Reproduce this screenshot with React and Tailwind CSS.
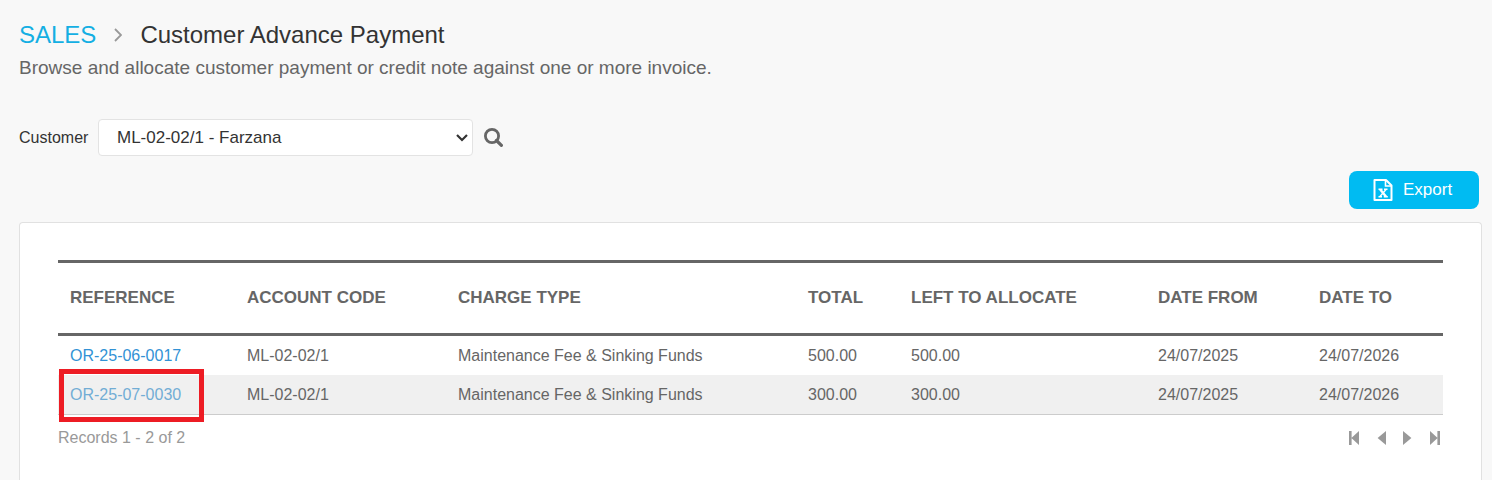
import { useState } from "react";

const payments = [
  {
    reference: "OR-25-06-0017",
    accountCode: "ML-02-02/1",
    chargeType: "Maintenance Fee & Sinking Funds",
    total: 500,
    left: 500,
    dateFrom: "24/07/2025",
    dateTo: "24/07/2026",
  },
  {
    reference: "OR-25-07-0030",
    accountCode: "ML-02-02/1",
    chargeType: "Maintenance Fee & Sinking Funds",
    total: 300,
    left: 300,
    dateFrom: "24/07/2025",
    dateTo: "24/07/2026",
    highlighted: true,
  },
];

const columns = [
  { label: "REFERENCE", width: "w-[177px]" },
  { label: "ACCOUNT CODE", width: "w-[211px]" },
  { label: "CHARGE TYPE", width: "w-[350px]" },
  { label: "TOTAL", width: "w-[103px]" },
  { label: "LEFT TO ALLOCATE", width: "w-[247px]" },
  { label: "DATE FROM", width: "w-[161px]" },
  { label: "DATE TO", width: "w-[136px]" },
];

const pagerButtons = [
  { label: "First page", path: "M0 0h2.6v14H0zM10 0v14L2.4 7z" },
  { label: "Previous page", path: "M10 0v14L1.6 7z" },
  { label: "Next page", path: "M0 0v14l8.400-7z" },
  { label: "Last page", path: "M7.400 0h2.600v14H7.400zM0 0v14l7.600-7z" },
];

const SearchIcon = () => (
  <svg className="w-[19px] h-[19px]" viewBox="0 0 19 19" fill="none" stroke="currentColor" aria-hidden="true">
    <circle cx="8" cy="8" r="6.6" strokeWidth="2.8" />
    <path d="M12.5 12.5l4.900 4.900" strokeWidth="3.2" strokeLinecap="round" />
  </svg>
);

const ExcelIcon = () => (
  <svg className="w-5 h-6" viewBox="0 0 20 24" fill="none" stroke="currentColor" aria-hidden="true">
    <path d="M1.5 2h11.500l5.500 5.500V22h-17z" strokeWidth="2" strokeLinejoin="round" />
    <path d="M12.5 2v6h6" strokeWidth="1.6" />
    <path d="M7.2 11.5l5.800 7" strokeWidth="2.4" />
    <path d="M13 11.5l-6 7" strokeWidth="1.4" />
    <path d="M5.5 11.2h4M11 11.2h3.500M5.5 18.8h3.500M10.8 18.8h4" strokeWidth="1.4" />
  </svg>
);

const App = () => {
  const [customer, setCustomer] = useState("ML-02-02/1");

  return (
    <div className="flex flex-col min-h-screen bg-[#f8f8f8] pl-[19px] pr-[10px] pt-5 text-base text-[#666] font-['Liberation_Sans',Arial,sans-serif]">
      {/* Breadcrumb */}
      <header>
        <div className="flex items-center h-[30px] text-2xl">
          <a href="#sales" className="text-[#14afe3]">SALES</a>
          <svg className="w-2 h-3.5 mx-[18px]" viewBox="0 0 8 14" fill="none" stroke="#999" strokeWidth="1.8" aria-hidden="true">
            <path d="M1 1l6 6-6 6" />
          </svg>
          <h1 className="text-[#333]">Customer Advance Payment</h1>
        </div>
        <p className="mt-1 text-[19px] leading-7">
          Browse and allocate customer payment or credit note against one or more invoice.
        </p>
      </header>

      {/* Customer filter */}
      <div className="flex items-center mt-[37px]">
        <label htmlFor="customer" className="w-[79px] text-[#333]">Customer</label>
        <div className="relative">
          <select
            id="customer"
            value={customer}
            onChange={(e) => setCustomer(e.target.value)}
            className="block w-[375px] h-[37px] pl-[18px] appearance-none bg-white border border-[#e3e3e3] rounded text-[17px] text-[#333]"
          >
            <option value="ML-02-02/1">ML-02-02/1 - Farzana</option>
          </select>
          <svg className="absolute right-1 top-[14px] w-3.5 h-2.5 pointer-events-none" viewBox="0 0 14 10" fill="none" stroke="#333" strokeWidth="2.2" aria-hidden="true">
            <path d="M2 2l5 5 5-5" />
          </svg>
        </div>
        <button type="button" aria-label="Search" className="ml-[11px]">
          <SearchIcon />
        </button>
      </div>

      <div className="flex justify-end mt-[15px] mr-[3px]">
        <button type="button" className="flex items-center gap-2.5 w-[130px] h-[38px] pl-6 rounded-lg bg-[#00bbf2] text-white text-[17px]">
          <ExcelIcon />
          Export
        </button>
      </div>

      {/* Payments table */}
      <main className="flex-1 mt-[13px] px-[38px] pt-[37px] bg-white border border-b-0 border-[#e1e1e1] rounded-t">
        <table className="w-full table-fixed border-separate border-spacing-0 text-left">
          <thead>
            <tr>
              {columns.map((column) => (
                <th
                  key={column.label}
                  scope="col"
                  className={`${column.width} h-[76px] px-3 border-y-3 border-[#666] text-[17px] font-bold whitespace-nowrap`}
                >
                  {column.label}
                </th>
              ))}
            </tr>
          </thead>
          <tbody>
            {payments.map((payment) => (
              <tr key={payment.reference} className="h-[39px] even:bg-[#f0f0f0]">
                <td className="relative px-3">
                  <a href={`#${payment.reference}`} className={payment.highlighted ? "text-[#72add5]" : "text-[#3292d5]"}>
                    {payment.reference}
                  </a>
                  {payment.highlighted && (
                    <span className="absolute -top-1.5 left-px w-[145px] h-[53px] border-5 border-[#ed1c24] pointer-events-none" />
                  )}
                </td>
                <td className="px-3">{payment.accountCode}</td>
                <td className="px-3">{payment.chargeType}</td>
                <td className="px-3">{payment.total.toFixed(2)}</td>
                <td className="px-3">{payment.left.toFixed(2)}</td>
                <td className="px-3">{payment.dateFrom}</td>
                <td className="px-3">{payment.dateTo}</td>
              </tr>
            ))}
          </tbody>
        </table>

        <div className="flex items-center justify-between pt-[11px] border-t border-[#ccc] text-[#999]">
          <p>Records 1 - 2 of {payments.length}</p>
          <nav aria-label="Pagination" className="flex gap-[17px] pr-[3px]">
            {pagerButtons.map((button) => (
              <button key={button.label} type="button" aria-label={button.label}>
                <svg className="w-2.5 h-3.5" viewBox="0 0 10 14" fill="currentColor" aria-hidden="true">
                  <path d={button.path} />
                </svg>
              </button>
            ))}
          </nav>
        </div>
      </main>
    </div>
  );
};

export default App;
